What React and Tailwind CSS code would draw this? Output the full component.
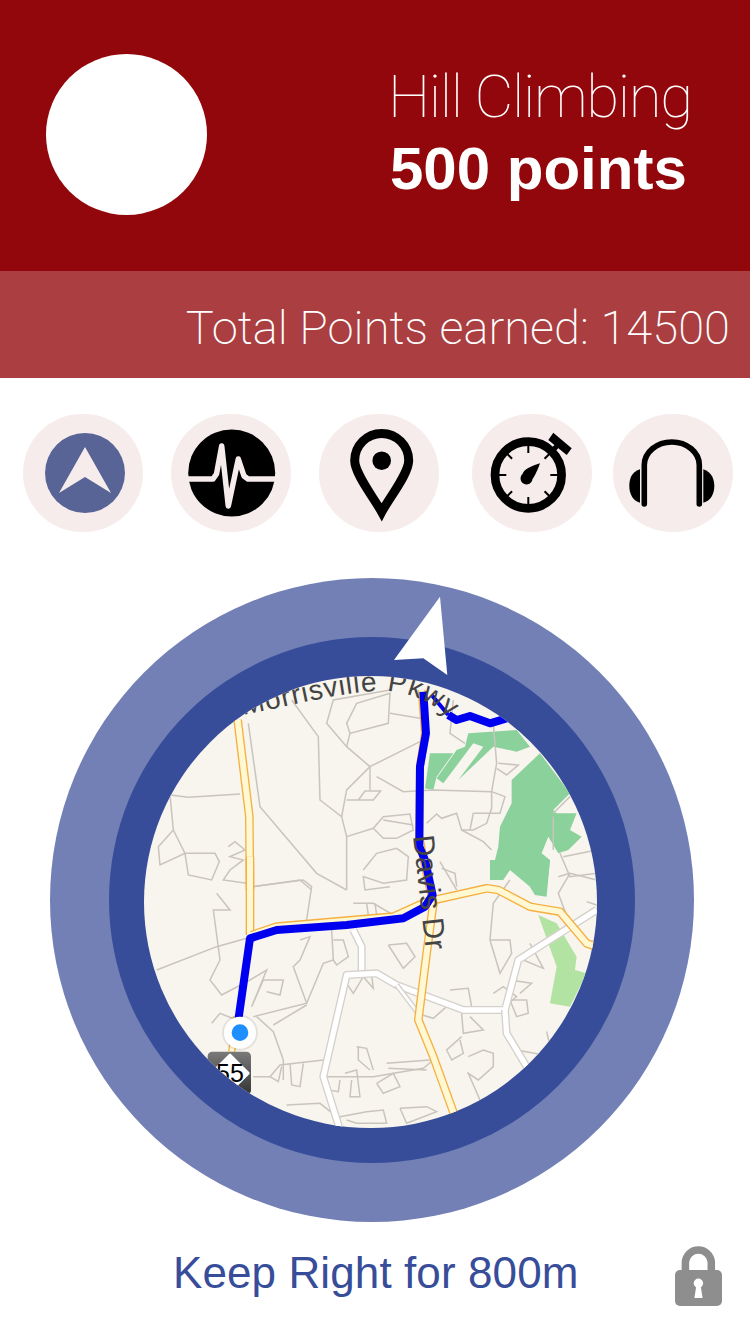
const grayTop = [
  'M90,615 L145,622 L300,612',
  'M90,615 L100,720 L55,770 L60,825 L135,790 L225,790 L238,815 L215,870 L145,855 L135,790',
  'M100,720 L135,790',
  'M325,400 L360,650 L530,850 L620,900',
  'M455,330 L535,440 L540,630 L605,680 L620,740 L620,900',
  'M605,680 L620,600 L690,530 L840,455',
  'M690,530 L620,470 L560,400 L580,330 L750,300',
  'M620,470 L630,430 L745,400 L750,310 L650,340 L620,400 L630,430',
  'M750,370 L840,385',
  'M690,530 L690,600',
  'M710,560 L790,605 L880,600 L1055,605 L1095,620 L1080,670 L1000,670 L990,720',
  'M620,630 L655,630 L675,603 L722,603 L700,630 L655,630',
  'M620,740 L700,715 L730,680 L810,672 L820,720 L770,745 L730,745 L700,715',
  'M730,690 L820,705',
  'M860,700 L890,672 L905,685 L950,670 L965,720 L1000,720 L1040,700 L1055,655 L1055,605',
  'M965,720 L1030,755 L1055,780',
  'M940,330 L930,430 L975,460',
  'M1060,400 L1070,520 L1055,605',
  'M1075,520 L1135,525 L1100,555 L1070,535',
  'M265,770 L285,755 L315,780 L270,800 L310,810 L270,840 L250,870 L320,880',
  'M340,890 L480,870 L515,900',
  'M670,840 L710,790 L770,775 L805,800 L800,870 L730,880 L670,860 L675,900 L750,890',
  'M900,815 L950,900',
  'M1270,800 L1370,780',
  'M1260,790 L1290,860 L1370,850',
  'M1240,680 L1240,780',
  'M1240,670 L1290,620',
]

const grayBottom = [
  'M50,330 L230,260 L320,235',
  'M230,100 L270,150 L220,150 L240,300 L210,360 L245,405 L330,360 L380,330 L335,440 L370,360 L430,360 L420,405 L380,395',
  'M340,80 L490,60 L515,80 L500,180',
  'M480,240 L510,230 L480,300 L460,320 L500,430 L340,470',
  'M500,430 L550,310 L580,300 L575,210',
  'M580,240 L610,240 L625,290 L590,315 L580,300',
  'M215,490 L240,460 L290,480',
  'M350,470 L400,515 L430,600 L430,660',
  'M400,495 L500,435',
  'M340,650 L390,650 L420,615 L550,600',
  'M390,650 L415,665 L425,620',
  'M450,610 L455,675 L480,680 L490,610',
  'M560,650 L700,650 L850,625 L880,600',
  'M740,610 L870,600',
  'M745,625 L860,630',
  'M600,660 L595,695 L565,690',
  'M615,640 L650,630 L660,710 L630,710 L635,660',
  'M710,670 L760,640 L780,680 L730,700 L710,670',
  'M650,560 L680,565 L700,630',
  'M655,560 L655,600 L690,630',
  'M440,735 L540,730 L590,770',
  'M445,770 L480,790',
  'M600,770 L680,755 L730,750 L740,790 L650,790 L620,780',
  'M780,745 L860,740 L890,755 L800,790 L780,745',
  'M640,130 L700,130 L760,165',
  'M680,130 L685,165',
  'M705,130 L710,165',
  'M1050,240 L1110,240 L1115,280 L1080,340 L1050,240',
  'M1050,240 L1060,130 L1110,60',
  'M905,25 L945,40 L950,80',
  'M930,390 L985,385 L995,440',
  'M830,460 L880,475 L920,440',
  'M965,460 L970,520 L1030,510 L990,470',
  'M965,530 L920,570 L935,600 L970,580 L960,540',
  'M985,590 L1030,570 L1060,580 L1060,620 L1015,660 L985,640 L1020,720',
  'M1060,400 L1090,380 L1130,410 L1095,440',
  'M1110,360 L1175,370 L1140,400',
  'M1110,420 L1160,420 L1165,460 L1130,470 L1110,420',
  'M1150,300 L1210,325 L1170,250',
  'M1220,515 L1240,600',
  'M1130,570 L1240,590',
  'M620,370 L640,400 L670,350 L700,385 L695,345',
  'M745,255 L800,250 L825,290 L790,325 L745,255',
  'M1255,50 L1290,40 L1370,60',
  'M1290,40 L1255,100 L1285,180',
  'M1340,125 L1370,135',
]

function Road({ d, outer, inner, w }) {
  return (
    <>
      <path d={d} fill="none" stroke={outer} strokeWidth={w} strokeLinejoin="round" />
      <path d={d} fill="none" stroke={inner} strokeWidth={w - 8} strokeLinejoin="round" />
    </>
  )
}

function MapDrawing() {
  const orange = '#f5b042'
  const pale = '#fff8d2'
  return (
    <svg viewBox="144 676 453 452" className="block w-full h-full">
      <defs>
        <linearGradient id="shield" x1="0" y1="0" x2="0" y2="1">
          <stop offset="0" stopColor="#7a7a7a" />
          <stop offset="1" stopColor="#333333" />
        </linearGradient>
        <path id="pkwy" d="M243 715 C300 704 360 687 395 692 C420 696 440 705 470 738" />
        <path id="davis" d="M413 836 L 427 960" />
      </defs>
      <rect x="144" y="676" width="453" height="452" fill="#f8f4ee" />
      <g transform="translate(140 590) scale(0.3333)">
        <path d="M1200,490 L1115,570 L1115,640 L1080,710 L1075,770 L1050,870 L1090,870 L1130,810 L1170,850 L1175,900 L1220,900 L1230,810 L1205,790 L1225,740 L1255,790 L1285,780 L1325,740 L1290,720 L1310,670 L1250,670 L1240,660 L1290,610 Z" fill="#8bd19b" />
        <path d="M985,430 L1130,420 L1170,470 L1130,485 L1060,470 L955,570 L1030,470 L1000,460 L910,580 L890,565 L950,480 L975,470 Z" fill="#8bd19b" />
        <path d="M870,490 L940,490 L890,560 L880,600 L855,595 Z" fill="#8bd19b" />
        {grayTop.map((d) => (
          <path key={d} d={d} fill="none" stroke="#c9c5bd" strokeWidth="4.5" />
        ))}
        <Road d="M293,390 L328,680 L330,900" outer={orange} inner={pale} w={26} />
        <Road d="M845,300 L855,430 L840,530 L838,740 L852,810" outer={orange} inner={pale} w={24} />
        <path d="M850,305 L858,430 L840,530 L838,770 L855,810" fill="none" stroke="#0000f0" strokeWidth="24" strokeLinejoin="round" />
        <path d="M925,375 L950,390 L990,378 L1050,400 L1100,385" fill="none" stroke="#0000f0" strokeWidth="24" strokeLinejoin="round" />
        <path d="M875,315 L925,375" fill="none" stroke="#0000f0" strokeWidth="12" />
      </g>
      <g transform="translate(140 860) scale(0.3333)">
        <path d="M1050,0 L1230,0 L1220,110 L1185,105 L1170,80 L1110,30 L1050,60 Z" fill="#8bd19b" />
        <path d="M1195,165 L1250,190 L1310,290 L1305,330 L1340,340 L1290,440 L1230,430 L1250,320 Z" fill="#b3e3a2" />
        {grayBottom.map((d) => (
          <path key={d} d={d} fill="none" stroke="#c9c5bd" strokeWidth="4.5" />
        ))}
        <Road d="M640,210 L665,260 L665,340" outer="#d4d1cc" inner="#ffffff" w={24} />
        <Road d="M600,810 L550,650 L620,345 L710,340 L770,375 L970,450 L1095,450 L1135,300 L1370,150" outer="#d4d1cc" inner="#ffffff" w={24} />
        <Road d="M1095,450 L1100,520 L1160,620" outer="#d4d1cc" inner="#ffffff" w={24} />
        <Road d="M770,375 L835,460" outer="#d4d1cc" inner="#ffffff" w={16} />
        <Road d="M330,-10 L330,225" outer={orange} inner={pale} w={26} />
        <Road d="M335,225 L410,200 L760,170 L860,125 L1040,85 L1075,90 L1170,140 L1260,155 L1340,250 L1375,262" outer={orange} inner={pale} w={26} />
        <Road d="M852,0 L880,130 L860,280 L835,480 L880,590 L945,770" outer={orange} inner={pale} w={26} />
        <Road d="M290,470 L275,575" outer={orange} inner={pale} w={22} />
        <path d="M855,0 L878,105 L855,140 L790,175 L620,195 L410,210 L330,235 L295,480" fill="none" stroke="#0000f0" strokeWidth="24" strokeLinejoin="round" />
        <circle cx="300" cy="518" r="54" fill="#000000" opacity="0.08" />
        <circle cx="300" cy="518" r="48" fill="#ffffff" />
        <circle cx="300" cy="518" r="25" fill="#1e8fff" />
        <rect x="203" y="575" width="130" height="130" rx="14" fill="url(#shield)" />
        <path d="M270,585 L325,640 L270,695 L215,640 Z" fill="#ffffff" stroke="#ffffff" strokeWidth="8" strokeLinejoin="round" />
      </g>
      <text fontSize="28" fill="#444444" fontFamily="'Liberation Sans', sans-serif" letterSpacing="1">
        <textPath href="#pkwy">Morrisville Pkwy</textPath>
      </text>
      <text fontSize="30" fill="#444444" fontFamily="'Liberation Sans', sans-serif">
        <textPath href="#davis">Davis Dr</textPath>
      </text>
      <text x="230" y="1082" fontSize="25" textAnchor="middle" fill="#000000" fontFamily="'Liberation Sans', sans-serif">55</text>
    </svg>
  )
}

function IconCircle({ className, children }) {
  return (
    <div className={`w-[120px] h-[118px] rounded-full bg-[#f6ecec] shrink-0 ${className}`}>
      <svg viewBox="0 0 120 118" className="block w-full h-full">
        {children}
      </svg>
    </div>
  )
}

function Tick({ angle, len }) {
  return (
    <line x1="56.3" y1={61 - 30} x2="56.3" y2={61 - 30 + len} stroke="#000" strokeWidth="2" transform={`rotate(${angle} 56.3 61)`} />
  )
}

function IconRow() {
  return (
    <div className="flex pl-[23px] pt-[36px]">
      <IconCircle>
        <circle cx="62" cy="59" r="40" fill="#596496" />
        <path d="M62 33 L88 79 L62 63 L36 79 Z" fill="#f6ecec" />
      </IconCircle>
      <IconCircle className="ml-[28px]">
        <circle cx="60.7" cy="59" r="43.5" fill="#000" />
        <path d="M15 65 L42 65 L45.5 60 L50.7 32 L57.3 92 L67.3 45 L73 62 L77 65 L106 65" fill="none" stroke="#f6ecec" strokeWidth="5.5" strokeLinejoin="round" />
      </IconCircle>
      <IconCircle className="ml-[28px]">
        <path d="M62.7 98 C55 84 35.7 60 35.7 46.5 A27 27 0 0 1 89.7 46.5 C89.7 60 70 84 62.7 98 Z" fill="none" stroke="#000" strokeWidth="9" strokeMiterlimit="10" />
        <circle cx="62.7" cy="46.7" r="9.3" fill="#000" />
      </IconCircle>
      <IconCircle className="ml-[33px]">
        <circle cx="56.3" cy="61" r="33.3" fill="none" stroke="#000" strokeWidth="8.7" />
        {[0, 45, 90, 135, 180, 225, 270, 315].map((a) => (
          <Tick key={a} angle={a} len={a % 90 === 0 ? 8 : 7} />
        ))}
        <path d="M68 49.3 C60 52 52 55 50.5 60 A6 6 0 1 0 60.5 65 C63 62 66 55 68 49.3 Z" fill="#000" />
        <path d="M81.3 18.7 L99.7 34.3 L94.7 41 L76.3 26 Z" fill="#000" />
        <line x1="86" y1="31" x2="79" y2="38" stroke="#000" strokeWidth="5" />
      </IconCircle>
      <IconCircle className="ml-[21px]">
        <path d="M31.3 90 L31.3 51 A27.5 23 0 0 1 86.3 51 L86.3 90" fill="none" stroke="#000" strokeWidth="5.6" strokeLinecap="round" />
        <path d="M27 55.3 C18 58 16.3 66 16.3 72 C16.3 80 20 87 27 88.7 Z" fill="#000" />
        <path d="M90.3 55.3 C99 58 101.3 66 101.3 72 C101.3 80 97.6 87 90.3 88.7 Z" fill="#000" />
      </IconCircle>
    </div>
  )
}

function LockIcon() {
  return (
    <svg viewBox="0 0 48 62" className="w-[48px] h-[62px] shrink-0">
      <path d="M10.4 27 L10.4 17 A13 13.25 0 0 1 36.3 17 L36.3 27" fill="none" stroke="#8e8e8e" strokeWidth="7.5" />
      <rect x="0" y="25" width="47" height="36" rx="5" fill="#8e8e8e" />
      <circle cx="23.4" cy="38.3" r="4.7" fill="#fff" />
      <path d="M21.6 39 L19.4 53 L27.6 53 L25.4 39 Z" fill="#fff" />
    </svg>
  )
}

export default function App() {
  return (
    <div className="w-[750px] h-[1334px] bg-white overflow-hidden font-['Liberation_Sans',sans-serif]">
      <header className="h-[271px] bg-[#92070b] flex items-center pl-[46px] text-white">
        <div className="w-[161px] h-[161px] rounded-full bg-white -mt-[2px]" />
        <div className="ml-[183px] -mt-[5px]">
          <p className="font-['Roboto',sans-serif] font-thin text-[60px] leading-[72px] tracking-[-1.4px] -ml-[2px] whitespace-nowrap">Hill Climbing</p>
          <p className="font-bold text-[60px] leading-[72px] whitespace-nowrap">500 points</p>
        </div>
      </header>

      <div className="h-[107px] bg-[#aa3e41] flex items-center justify-end pr-[20px] pt-[8px]">
        <p className="font-['Roboto',sans-serif] font-extralight text-[47px] tracking-[0.05px] text-white whitespace-nowrap">Total Points earned: 14500</p>
      </div>

      <IconRow />

      <div className="relative w-[644px] h-[644px] ml-[50px] mt-[46px] rounded-full bg-[#7380b6] flex items-center justify-center">
        <div className="w-[526px] h-[526px] rounded-full bg-[#374d99] flex items-center justify-center">
          <div className="w-[453px] h-[452px] rounded-full overflow-hidden mr-[3px] mt-[4px]">
            <MapDrawing />
          </div>
        </div>
        <svg viewBox="392 595 58 82" className="absolute left-[342px] top-[17px] w-[58px] h-[82px]">
          <path d="M440 596.7 L447.3 675 L423.3 658.3 L394 660 Z" fill="#ffffff" />
        </svg>
      </div>

      <div className="flex items-center pl-[173px] pr-[27px] mt-[23px]">
        <p className="text-[44px] leading-[58px] tracking-[0.1px] -mt-[6px] text-[#384d99] whitespace-nowrap">Keep Right for 800m</p>
        <div className="ml-auto">
          <LockIcon />
        </div>
      </div>
    </div>
  )
}
